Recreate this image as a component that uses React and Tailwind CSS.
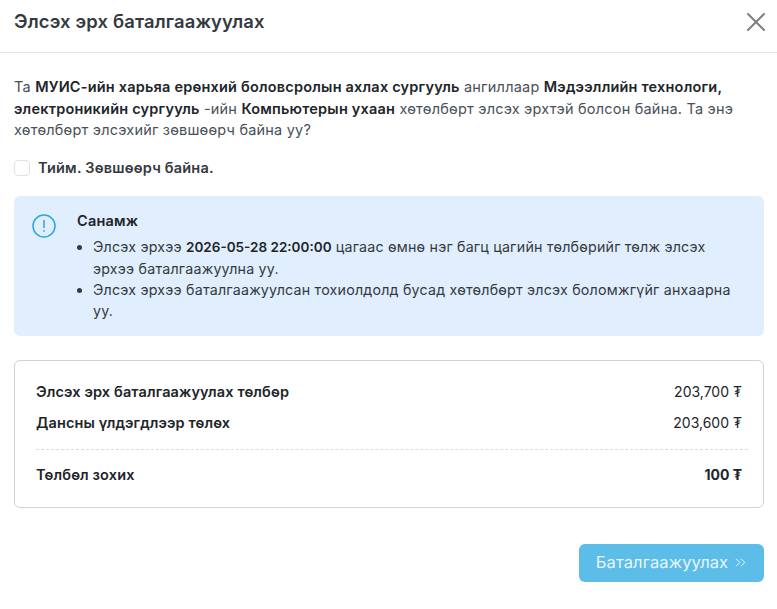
import { ChevronsRight, X } from "lucide-react";

function PayRow({ label, amount, bold }) {
    return (
        <div className="flex items-center justify-between h-[22px]">
            <span className="font-semibold tracking-[0.12px] text-[#212529]">{label}</span>
            <span className={bold ? "font-bold text-[14px] tracking-normal text-[#212529]" : "text-[14px] tracking-normal text-[#212529]"}>{amount} ₮</span>
        </div>
    );
}

export default function App() {
    return (
        <div className="w-[777px] h-[609px] bg-white font-['Inter',sans-serif] text-[14.5px] tracking-[0.2px] text-[#495057] overflow-hidden">
            <div className="flex items-center justify-between h-[53px] border-b border-[#e2e5ec] pl-[14px] pr-[5px] pb-[9px]">
                <h2 className="text-[18.4px] tracking-[0.15px] font-semibold text-[#343a40]">Элсэх эрх баталгаажуулах</h2>
                <X className="w-[32px] h-[32px] text-[#7f7f7f]" strokeWidth={1.5} />
            </div>

            <div className="pl-[14px] pr-[13px] pt-[23px]">
                <p className="leading-[21.5px]">
                    Та <b className="font-semibold text-[#212529]">МУИС-ийн харьяа ерөнхий боловсролын ахлах сургууль</b> ангиллаар{" "}
                    <b className="font-semibold text-[#212529]">Мэдээллийн технологи, электроникийн сургууль</b> -ийн{" "}
                    <b className="font-semibold text-[#212529]">Компьютерын ухаан</b> хөтөлбөрт элсэх эрхтэй болсон байна. Та энэ хөтөлбөрт элсэхийг зөвшөөрч байна уу?
                </p>

                <label className="flex items-center gap-[8px] mt-[16px] h-[22px]">
                    <span className="w-[16px] h-[16px] rounded-[4px] border border-[#dee2e6] bg-white" />
                    <span className="font-semibold text-[#343a40]">Тийм. Зөвшөөрч байна.</span>
                </label>

                <div className="flex mt-[17px] h-[140px] rounded-[6px] bg-[#e0eefe] pl-[18px] pr-[20px] pt-[14px]">
                    <svg className="w-[24px] h-[24px] mt-[4px] shrink-0" viewBox="0 0 24 24" fill="none" stroke="#29a9dc" strokeWidth="1.5" strokeLinecap="round">
                        <circle cx="12" cy="12" r="11" />
                        <path d="M12 6.5v7" />
                        <path d="M12 16.8v.4" />
                    </svg>
                    <div className="ml-[21px] min-w-0">
                        <div className="font-semibold text-[#212529] leading-[21px]">Санамж</div>
                        <ul className="list-disc pl-[16px] mt-[5px] text-[14.25px] leading-[21px] text-[#343a40]">
                            <li>
                                Элсэх эрхээ <b className="font-semibold text-[13.5px] tracking-normal text-[#212529]">2026-05-28 22:00:00</b> цагаас өмнө нэг багц цагийн төлбөрийг төлж элсэх эрхээ баталгаажуулна уу.
                            </li>
                            <li>Элсэх эрхээ баталгаажуулсан тохиолдолд бусад хөтөлбөрт элсэх боломжгүйг анхаарна уу.</li>
                        </ul>
                    </div>
                </div>

                <div className="mt-[24px] h-[148px] rounded-[6px] border border-[#d2d2d2] px-[21px] pt-[20px]">
                    <div className="flex flex-col gap-[9px]">
                        <PayRow label="Элсэх эрх баталгаажуулах төлбөр" amount="203,700" />
                        <PayRow label="Дансны үлдэгдлээр төлөх" amount="203,600" />
                    </div>
                    <div className="mt-[15px] mb-[14px] border-t border-dashed border-[#dcdcdc] -mr-[6px]" />
                    <PayRow label="Төлбөл зохих" amount="100" bold />
                </div>

                <div className="flex justify-end mt-[36px]">
                    <button className="flex items-center justify-center gap-[4px] w-[185px] h-[38px] pl-[2px] rounded-[6px] bg-[#5bbde8] text-[#eaf6fc] text-[16.5px] tracking-[0.1px]">
                        Баталгаажуулах
                        <ChevronsRight className="w-[17px] h-[17px]" strokeWidth={1.4} />
                    </button>
                </div>
            </div>
        </div>
    );
}
